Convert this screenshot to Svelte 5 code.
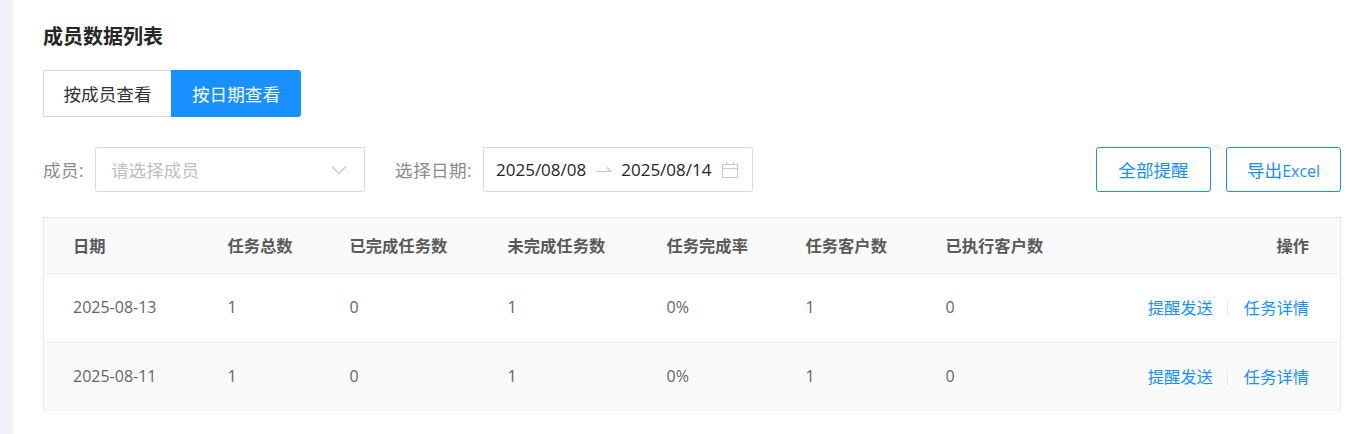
<script>
  // Table data
  const rows = [
    { date: '2025-08-13', total: 1, done: 0, undone: 1, rate: '0%', customers: 1, executed: 0 },
    { date: '2025-08-11', total: 1, done: 0, undone: 1, rate: '0%', customers: 1, executed: 0 }
  ];
</script>

<div class="page">
  <div class="panel">
    <h3 class="title">成员数据列表</h3>

    <div class="tabs">
      <button class="tab">按成员查看</button>
      <button class="tab active">按日期查看</button>
    </div>

    <div class="filters">
      <span class="label">成员:</span>
      <div class="select">
        <span class="placeholder">请选择成员</span>
        <svg class="arrow" width="16" height="10" viewBox="0 0 16 10" fill="none">
          <path d="M1 1.5l7 7 7-7" stroke="#c4c4c4" stroke-width="1.2" />
        </svg>
      </div>
      <span class="label date-label">选择日期:</span>
      <div class="range">
        <span>2025/08/08</span>
        <svg class="sep" width="16" height="8" viewBox="0 0 16 8" fill="none">
          <path d="M0 5.5h15L11 1.5" stroke="#c4c4c4" stroke-width="1.2" />
        </svg>
        <span>2025/08/14</span>
        <svg class="cal" width="16" height="16" viewBox="0 0 16 16" fill="none" stroke="#c8c8c8" stroke-width="1">
          <rect x="0.5" y="2.5" width="15" height="13" />
          <path d="M0.5 6.5h15M4.5 0v3M11.5 0v3" />
        </svg>
      </div>
      <div class="actions">
        <button class="outline">全部提醒</button>
        <button class="outline">导出<span class="latin">Excel</span></button>
      </div>
    </div>

    <table>
      <colgroup>
        <col class="c1" />
        <col class="c2" />
        <col class="c3" />
        <col class="c4" />
        <col class="c5" />
        <col class="c6" />
        <col class="c7" />
        <col />
      </colgroup>
      <thead>
        <tr>
          <th>日期</th>
          <th>任务总数</th>
          <th>已完成任务数</th>
          <th>未完成任务数</th>
          <th>任务完成率</th>
          <th>任务客户数</th>
          <th>已执行客户数</th>
          <th class="right">操作</th>
        </tr>
      </thead>
      <tbody>
        {#each rows as row}
          <tr>
            <td>{row.date}</td>
            <td>{row.total}</td>
            <td>{row.done}</td>
            <td>{row.undone}</td>
            <td>{row.rate}</td>
            <td>{row.customers}</td>
            <td>{row.executed}</td>
            <td class="right">
              <a href="#remind">提醒发送</a><i class="divider"></i><a href="#detail">任务详情</a>
            </td>
          </tr>
        {/each}
      </tbody>
    </table>
  </div>
</div>

<style>
  :global(body) {
    margin: 0;
    background: #fff;
  }

  .page {
    height: 434px;
    overflow: hidden;
    border-left: 13px solid #f0f2f7;
    padding: 0 6px 0 30px;
    font-family: "Open Sans", "Noto Sans CJK SC", sans-serif;
    color: #333;
  }

  .title {
    margin: 0;
    padding: 23px 0 19px;
    line-height: 28px;
    font-size: 20px;
    font-weight: 700;
    color: #262626;
  }

  .tabs {
    display: flex;
    height: 47px;
  }

  .tab {
    box-sizing: border-box;
    width: 128px;
    height: 47px;
    padding: 0;
    border: 1px solid #d9d9d9;
    border-right: 0;
    border-radius: 3px 0 0 3px;
    background: #fff;
    color: #333;
    font: inherit;
    font-size: 17.6px;
  }

  .tab.active {
    width: 130px;
    border: 0;
    border-radius: 0 3px 3px 0;
    background: #1890ff;
    color: #fff;
  }

  .filters {
    display: flex;
    align-items: center;
    margin-top: 30px;
    height: 45px;
    font-size: 17.6px;
  }

  .label {
    color: #8c8c8c;
    width: 52px;
    letter-spacing: 0.4px;
  }

  .date-label {
    width: 88px;
    margin-left: 30px;
  }

  .select {
    box-sizing: border-box;
    display: flex;
    align-items: center;
    justify-content: space-between;
    width: 270px;
    height: 45px;
    padding: 0 17px 0 15px;
    border: 1px solid #d9d9d9;
    border-radius: 3px;
  }

  .placeholder {
    color: #bfbfbf;
  }

  .range {
    box-sizing: border-box;
    display: flex;
    align-items: center;
    width: 270px;
    height: 45px;
    padding: 0 14px 0 12px;
    border: 1px solid #d9d9d9;
    border-radius: 3px;
    color: #262626;
    font-size: 17px;
    white-space: nowrap;
  }

  .sep {
    margin: 0 9px 0 10px;
  }

  .cal {
    margin-left: auto;
  }

  .actions {
    display: flex;
    gap: 15px;
    margin-left: auto;
  }

  .outline {
    box-sizing: border-box;
    width: 115px;
    height: 45px;
    padding: 0;
    border: 1px solid #1890ff;
    border-radius: 3px;
    background: #fff;
    color: #1890ff;
    font: inherit;
    font-size: 17.6px;
  }

  .latin {
    font-size: 16px;
  }

  table {
    box-sizing: border-box;
    width: 1298px;
    margin-top: 25px;
    border: 1px solid #e8e8e8;
    border-collapse: collapse;
    table-layout: fixed;
    font-size: 16px;
  }

  .c1 { width: 155px; }
  .c2 { width: 122px; }
  .c3 { width: 158px; }
  .c4 { width: 159px; }
  .c5 { width: 139px; }
  .c6 { width: 140px; }
  .c7 { width: 140px; }

  th,
  td {
    box-sizing: border-box;
  }

  th {
    height: 56px;
    padding: 0 0 2px 29px;
    background: #fafafa;
    border-bottom: 1px solid #f0f0f0;
    text-align: left;
    font-size: 16.3px;
    font-weight: 700;
    color: #595959;
  }

  td {
    height: 69px;
    padding: 0 0 2px 29px;
    border-bottom: 1px solid #f0f0f0;
    color: #666;
  }

  tbody tr:nth-child(2) td {
    height: 68px;
    background: #fafafa;
  }

  th.right,
  td.right {
    padding: 0 31px 2px 0;
    text-align: right;
    white-space: nowrap;
  }

  a {
    color: #1890ff;
    text-decoration: none;
    font-size: 16.3px;
  }

  .divider {
    display: inline-block;
    width: 1px;
    height: 16px;
    margin: 0 16px 0 14px;
    background: #e8e8e8;
    vertical-align: -3px;
  }
</style>
